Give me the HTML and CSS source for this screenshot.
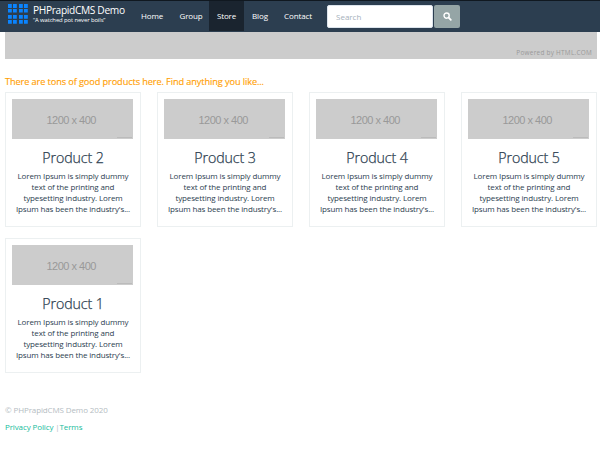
FILE: index.html
```html
<!DOCTYPE html>
<html lang="en">
<head>
<meta charset="utf-8">
<title>PHPrapidCMS Demo</title>
<link rel="stylesheet" href="styles.css">
</head>
<body>
<nav class="navbar">
  <a class="brand">
    <svg class="logo" width="20" height="20" viewBox="0 0 20 20" fill="#0a84ff">
      <path d="M0 0h3.8v4H0zM5 0h3.8v4H5zM11 0h3.8v4H11zM16 0h3.8v4H16zM0 5h3.8v3.6H0zM5 5h3.8v3.6H5zM11 5h3.8v3.6H11zM16 5h3.8v3.6H16zM0 11h3.8v3.8H0zM5 11h3.8v3.8H5zM11 11h3.8v3.8H11zM16 11h3.8v3.8H16zM0 16h3.8v3.8H0zM5 16h3.8v3.8H5zM11 16h3.8v3.8H11zM16 16h3.8v3.8H16z"/>
    </svg>
    <span class="names"><span class="site">PHPrapidCMS Demo</span><span class="tagline">“A watched pot never boils”</span></span>
  </a>
  <div class="menu">
    <a>Home</a><a>Group</a><a class="active">Store</a><a>Blog</a><a>Contact</a>
  </div>
  <form class="search">
    <input type="text" placeholder="Search">
    <button type="button" aria-label="Search">
      <svg width="9" height="9" viewBox="0 0 9 9" fill="none" stroke="#fff" stroke-linecap="round"><circle cx="3.6" cy="3.6" r="2.6" stroke-width="1.4"/><path d="M5.7 5.7L7.8 7.8" stroke-width="1.8"/></svg>
    </button>
  </form>
</nav>
<div class="banner"><span>Powered by HTML.COM</span></div>
<main>
  <p class="intro">There are tons of good products here. Find anything you like...</p>
  <div class="grid">
    <article class="card"><div class="thumb"><span>1200 x 400</span><i></i></div><h3>Product 2</h3><p>Lorem Ipsum is simply dummy<br>text of the printing and<br>typesetting industry. Lorem<br>Ipsum has been the industry's...</p></article>
    <article class="card"><div class="thumb"><span>1200 x 400</span><i></i></div><h3>Product 3</h3><p>Lorem Ipsum is simply dummy<br>text of the printing and<br>typesetting industry. Lorem<br>Ipsum has been the industry's...</p></article>
    <article class="card"><div class="thumb"><span>1200 x 400</span><i></i></div><h3>Product 4</h3><p>Lorem Ipsum is simply dummy<br>text of the printing and<br>typesetting industry. Lorem<br>Ipsum has been the industry's...</p></article>
    <article class="card"><div class="thumb"><span>1200 x 400</span><i></i></div><h3>Product 5</h3><p>Lorem Ipsum is simply dummy<br>text of the printing and<br>typesetting industry. Lorem<br>Ipsum has been the industry's...</p></article>
    <article class="card"><div class="thumb"><span>1200 x 400</span><i></i></div><h3>Product 1</h3><p>Lorem Ipsum is simply dummy<br>text of the printing and<br>typesetting industry. Lorem<br>Ipsum has been the industry's...</p></article>
  </div>
</main>
<footer>
  <p>© PHPrapidCMS Demo 2020</p>
  <p><a>Privacy Policy</a> |<a>Terms</a></p>
</footer>
</body>
</html>
```
FILE: styles.css
```css
* { box-sizing: border-box; }
body { margin: 0; background: #fff; color: #2c3e50; font-family: "Open Sans", "Noto Sans", sans-serif; font-size: 8px; letter-spacing: -.12px; overflow: hidden; height: 450px; }
p, h3 { margin: 0; white-space: nowrap; }
.navbar { display: flex; height: 32px; background: #2c3e50; border-top: 1px solid #101820; color: #fff; }
.brand { display: flex; width: 131px; padding: 3px 0 0 8px; }
.names { display: flex; flex-direction: column; padding: 0 0 0 5px; white-space: nowrap; }
.site { font-size: 10.2px; line-height: 13px; letter-spacing: -.34px; }
.tagline { font-size: 5.9px; line-height: 7px; letter-spacing: -.1px; }
.menu { display: flex; height: 30px; line-height: 30px; }
.menu a { width: 42px; text-align: center; white-space: nowrap; }
.menu a:nth-child(2) { width: 36px; }
.menu a.active { width: 35px; background: #1a242f; }
.menu a:nth-child(4) { width: 32px; }
.menu a:nth-child(5) { width: 44px; }
.search { display: flex; gap: 1px; margin: 4px 0 0 7px; height: 23px; }
.search input { width: 106px; padding: 0 8px; border: 1px solid #dce4ec; border-radius: 2px; font: 8px "Open Sans", sans-serif; background: #fff; }
.search input::placeholder { color: #a5b1bb; opacity: 1; }
.search button { width: 26px; padding: 0; border: 0; border-radius: 2px; background: #95a5a6; display: flex; align-items: center; justify-content: center; }
.banner { height: 27px; margin: 0 3px 0 5px; background: #ccc; color: #999; display: flex; align-items: flex-end; justify-content: flex-end; padding: 0 5px 2px 0; font-size: 6.4px; line-height: 9px; letter-spacing: .27px; }
main { padding: 16px 3px 0 5px; }
.intro { color: #ff9f05; font-size: 9.2px; line-height: 14px; letter-spacing: -.1px; -webkit-text-stroke: .15px #ff9f05; }
.grid { display: grid; grid-template-columns: repeat(4, 136px); column-gap: 16px; row-gap: 11px; padding-top: 3px; }
.card { height: 135px; border: 1px solid #ecf0f1; padding: 6px; text-align: center; }
.thumb { position: relative; height: 40.4px; width: 121.4px; background: #ccc; color: #999; font: 11px/42px "Liberation Sans", sans-serif; letter-spacing: -.5px; padding-right: 3px; }
.thumb i { position: absolute; right: 1px; bottom: 1px; width: 15px; height: 1px; background: #bbb; }
.card h3 { font-size: 14.2px; line-height: 18px; font-weight: 300; margin-top: 9.6px; letter-spacing: -.1px; -webkit-text-stroke: .25px #2c3e50; }
.card p { line-height: 11px; margin-top: 3px; letter-spacing: -.13px; }
footer { margin: 28px 5px 0; line-height: 17px; color: #b4bcc2; }
footer a { color: #18bc9c; }
```
